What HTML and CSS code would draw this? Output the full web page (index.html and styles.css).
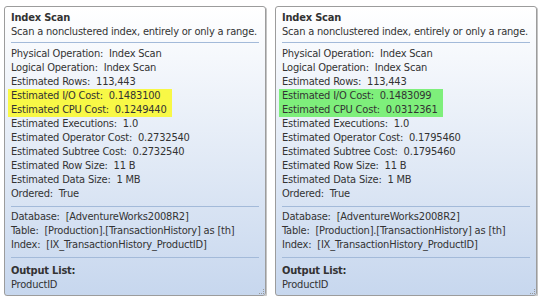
FILE: index.html
```html
<!DOCTYPE html>
<html lang="en">
<head>
  <meta charset="UTF-8">
  <title>Index Scan tooltips</title>
  <link rel="stylesheet" href="styles.css">
</head>
<body>
  <div class="tips">
    <div class="tip">
      <div class="title">Index Scan</div>
      <div>Scan a nonclustered index, entirely or only a range.</div>
      <div class="sep"></div>
      <div>Physical Operation:&nbsp; Index Scan</div>
      <div>Logical Operation:&nbsp; Index Scan</div>
      <div>Estimated Rows:&nbsp; 113,443</div>
      <div class="mark yellow">
        <div>Estimated I/O Cost:&nbsp; 0.1483100</div>
        <div>Estimated CPU Cost:&nbsp; 0.1249440</div>
      </div>
      <div>Estimated Executions:&nbsp; 1.0</div>
      <div>Estimated Operator Cost:&nbsp; 0.2732540</div>
      <div>Estimated Subtree Cost:&nbsp; 0.2732540</div>
      <div>Estimated Row Size:&nbsp; 11 B</div>
      <div>Estimated Data Size:&nbsp; 1 MB</div>
      <div>Ordered:&nbsp; True</div>
      <div class="sep mid"></div>
      <div>Database:&nbsp; [AdventureWorks2008R2]</div>
      <div>Table:&nbsp; [Production].[TransactionHistory] as [th]</div>
      <div>Index:&nbsp; [IX_TransactionHistory_ProductID]</div>
      <div class="sep low"></div>
      <div class="title">Output List:</div>
      <div>ProductID</div>
      <span class="grip"></span>
    </div>

    <div class="tip">
      <div class="title">Index Scan</div>
      <div>Scan a nonclustered index, entirely or only a range.</div>
      <div class="sep"></div>
      <div>Physical Operation:&nbsp; Index Scan</div>
      <div>Logical Operation:&nbsp; Index Scan</div>
      <div>Estimated Rows:&nbsp; 113,443</div>
      <div class="mark green">
        <div>Estimated I/O Cost:&nbsp; 0.1483099</div>
        <div>Estimated CPU Cost:&nbsp; 0.0312361</div>
      </div>
      <div>Estimated Executions:&nbsp; 1.0</div>
      <div>Estimated Operator Cost:&nbsp; 0.1795460</div>
      <div>Estimated Subtree Cost:&nbsp; 0.1795460</div>
      <div>Estimated Row Size:&nbsp; 11 B</div>
      <div>Estimated Data Size:&nbsp; 1 MB</div>
      <div>Ordered:&nbsp; True</div>
      <div class="sep mid"></div>
      <div>Database:&nbsp; [AdventureWorks2008R2]</div>
      <div>Table:&nbsp; [Production].[TransactionHistory] as [th]</div>
      <div>Index:&nbsp; [IX_TransactionHistory_ProductID]</div>
      <div class="sep low"></div>
      <div class="title">Output List:</div>
      <div>ProductID</div>
      <span class="grip"></span>
    </div>
  </div>
</body>
</html>
```

FILE: styles.css
```css
body { margin: 0; padding: 6px 0 0 4px; background: #fff; font-family: "DejaVu Sans Condensed", "DejaVu Sans", sans-serif; font-stretch: condensed; font-size: 11px; letter-spacing: -0.2px; color: #333; }
.tips { display: flex; gap: 9px; }
.tip { position: relative; width: 248px; padding: 4px 6px 3px 6px; line-height: 14px; white-space: nowrap; border: 1px solid #9c9c9c; border-radius: 3px; box-shadow: 1px 1px 0 #c4c4c4; background: linear-gradient(#ffffff, #c7d7ee); }
.title { font-weight: bold; }
.sep { height: 1px; margin: 3px 0 4px; background: #a3bad9; }
.sep.mid { margin: 5px 0 3px; }
.sep.low { margin: 5px 0 6px; }
.mark { width: fit-content; margin-left: -3px; padding: 0 5px 0 3px; }
.yellow { background: #f8f846; }
.green { background: #7eef7b; }
.grip { position: absolute; right: 1px; bottom: 1px; width: 4px; height: 4px; border-right: 1px dotted #999; border-bottom: 1px dotted #999; }
```
